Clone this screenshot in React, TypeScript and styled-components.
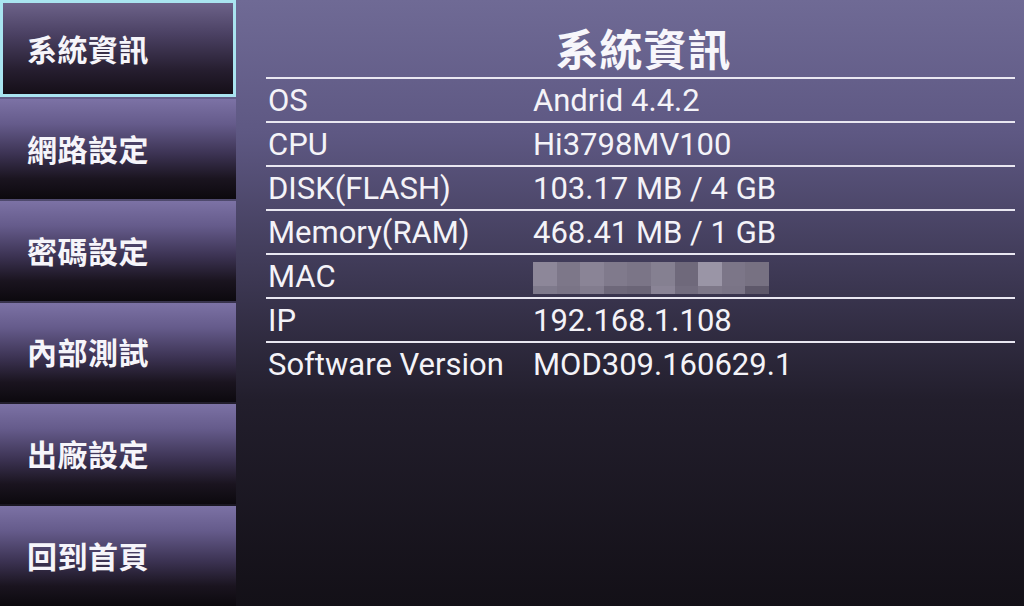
import React from "react";
import styled, { createGlobalStyle } from "styled-components";

const Global = createGlobalStyle`
  html, body { margin: 0; padding: 0; background: #121016; }
  #root { width: 1024px; height: 606px; overflow: hidden; }
`;

const Screen = styled.div`
  width: 1024px;
  height: 606px;
  display: grid;
  grid-template-columns: 236px 1fr;
  background: linear-gradient(180deg, #6f6a95 0%, #5e5883 22%, #3e3955 45%, #221e2c 66%, #131017 100%);
  font-family: Roboto, "Noto Sans CJK TC", sans-serif;
  color: #f4f3f8;
`;

const Sidebar = styled.nav`
  display: flex;
  flex-direction: column;
  gap: 2px;
`;

const MenuButton = styled.div<{ $active?: boolean }>`
  flex: ${(p) => (p.$active ? "0 0 97px" : "1")};
  display: flex;
  align-items: center;
  padding-left: ${(p) => (p.$active ? "24px" : "27px")};
  padding-bottom: 2px;
  box-sizing: border-box;
  font-family: "Noto Sans CJK TC", "Noto Sans CJK SC", sans-serif;
  font-weight: 700;
  font-size: 30px;
  letter-spacing: 0.5px;
  color: #f6f5fa;
  background: ${(p) =>
    p.$active
      ? "linear-gradient(180deg, #6c6289 0%, #4a4062 35%, #251d2e 75%, #150f18 100%)"
      : "linear-gradient(180deg, #7c72a5 0%, #655b8b 25%, #3c3353 55%, #1a141f 80%, #0c090e 100%)"};
  border: ${(p) => (p.$active ? "3px solid #a9e4f0" : "none")};
`;

const Main = styled.main`
  display: flex;
  flex-direction: column;
  padding: 0 9px 0 30px;
`;

const Title = styled.h1`
  margin: 0;
  height: 77px;
  display: flex;
  align-items: flex-end;
  justify-content: center;
  padding-bottom: 6px;
  padding-left: 6px;
  box-sizing: border-box;
  font-family: "Noto Sans CJK TC", "Noto Sans CJK SC", sans-serif;
  font-weight: 700;
  font-size: 43px;
  line-height: 1.1;
  letter-spacing: 1px;
  color: #f7f6fb;
`;

const Table = styled.div`
  display: flex;
  flex-direction: column;
`;

const Row = styled.div`
  display: grid;
  grid-template-columns: 265px 1fr;
  height: 44px;
  box-sizing: border-box;
  border-top: 2px solid #e9e7f1;
  align-items: center;
  padding-left: 2px;
  font-size: 31px;
  line-height: 1;
`;

const Cell = styled.span`
  white-space: nowrap;
  padding-top: 1px;
`;

const Mosaic = styled.div`
  display: flex;
  width: 236px;
  height: 32px;
  margin-top: 2px;
`;

const Tile = styled.div<{ $top: string; $bottom: string }>`
  flex: 1;
  display: flex;
  flex-direction: column;
  & > i:first-child { flex: 3; background: ${(p) => p.$top}; }
  & > i:last-child { flex: 1; background: ${(p) => p.$bottom}; }
`;

const mosaic: [string, string][] = [
  ["#8d8799", "#7f7a8c"],
  ["#7d7789", "#7a7486"],
  ["#8a8496", "#827c8e"],
  ["#807a8c", "#6e687a"],
  ["#7b7587", "#6b6577"],
  ["#858091", "#8a8496"],
  ["#6f697b", "#736d7f"],
  ["#9a95a6", "#7e7889"],
  ["#7c7688", "#7a7486"],
  ["#777182", "#5e586a"],
];

const rows: [string, React.ReactNode][] = [
  ["OS", "Andrid 4.4.2"],
  ["CPU", "Hi3798MV100"],
  ["DISK(FLASH)", "103.17 MB / 4 GB"],
  ["Memory(RAM)", "468.41 MB / 1 GB"],
  [
    "MAC",
    <Mosaic>
      {mosaic.map(([t, b], i) => (
        <Tile key={i} $top={t} $bottom={b}>
          <i />
          <i />
        </Tile>
      ))}
    </Mosaic>,
  ],
  ["IP", "192.168.1.108"],
  ["Software Version", "MOD309.160629.1"],
];

const menu = ["系統資訊", "網路設定", "密碼設定", "內部測試", "出廠設定", "回到首頁"];

export default function App() {
  return (
    <>
      <Global />
      <Screen>
        <Sidebar>
          {menu.map((m, i) => (
            <MenuButton key={m} $active={i === 0}>
              {m}
            </MenuButton>
          ))}
        </Sidebar>
        <Main>
          <Title>系統資訊</Title>
          <Table>
            {rows.map(([k, v]) => (
              <Row key={k}>
                <Cell>{k}</Cell>
                <Cell>{v}</Cell>
              </Row>
            ))}
          </Table>
        </Main>
      </Screen>
    </>
  );
}
